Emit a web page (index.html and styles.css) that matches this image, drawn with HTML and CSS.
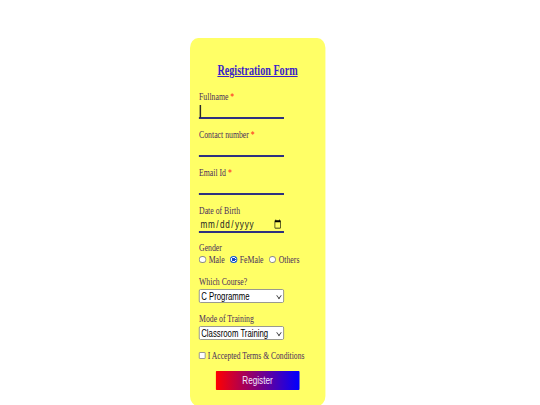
FILE: index.html
```html
<!DOCTYPE html>
<html lang="en">
<head>
<meta charset="utf-8">
<title>Registration Form</title>
<link rel="stylesheet" href="styles.css">
</head>
<body>
<form class="card">
  <h1 class="title">Registration Form</h1>

  <div class="field">
    <label class="lbl" for="fullname">Fullname <span class="req">*</span></label>
    <div class="wrap">
      <input class="line" id="fullname" type="text">
      <span class="caret"></span>
    </div>
  </div>

  <div class="field">
    <label class="lbl" for="contact">Contact number <span class="req">*</span></label>
    <input class="line" id="contact" type="text">
  </div>

  <div class="field">
    <label class="lbl" for="email">Email Id <span class="req">*</span></label>
    <input class="line" id="email" type="text">
  </div>

  <div class="field field-date">
    <label class="lbl" for="dob">Date of Birth</label>
    <input class="line date" id="dob" type="date">
  </div>

  <div class="field">
    <div class="lbl">Gender</div>
    <div class="opts">
      <label class="opt"><input class="radio" type="radio" name="g">Male</label>
      <label class="opt"><input class="radio" type="radio" name="g" checked>FeMale</label>
      <label class="opt"><input class="radio" type="radio" name="g">Others</label>
    </div>
  </div>

  <div class="field">
    <label class="lbl" for="course">Which Course?</label>
    <div class="selwrap">
      <select class="sel" id="course">
        <option>C Programme</option>
        <option>Java</option>
        <option>Python</option>
      </select>
    </div>
  </div>

  <div class="field">
    <label class="lbl" for="mode">Mode of Training</label>
    <div class="selwrap">
      <select class="sel" id="mode">
        <option>Classroom Training</option>
        <option>Online Training</option>
      </select>
    </div>
  </div>

  <label class="terms"><input class="check" type="checkbox">I Accepted Terms &amp; Conditions</label>

  <button class="btn" type="button">Register</button>
</form>
</body>
</html>
```

FILE: styles.css
```css
html, body {
  margin: 0;
  padding: 0;
  overflow: hidden;
  background: #ffffff;
}

body {
  height: 405px;
}

.card {
  margin: 38px 0 0 190px;
  width: 182.5px;
  height: 368px;
  box-sizing: border-box;
  padding: 25px 12.2px 0 12.2px;
  background: #ffff66;
  border-radius: 11px / 10px;
  transform: scaleX(0.74);
  transform-origin: 0 0;
  font-family: "Liberation Serif", "Times New Roman", serif;
  color: #4a2d5c;
}

.title {
  margin: 0 0 11px 0;
  font-size: 13.7px;
  line-height: 16px;
  font-weight: bold;
  text-align: center;
  text-decoration: underline;
  color: #3a1ec8;
}

.field {
  margin-bottom: 9px;
}

.field-date {
  margin-bottom: 8px;
}

.lbl {
  display: block;
  font-size: 10.5px;
  line-height: 13px;
}

.req {
  color: #ff1a1a;
}

.wrap {
  position: relative;
  width: 115px;
}

.caret {
  position: absolute;
  left: 1px;
  top: 2px;
  width: 1.4px;
  height: 13px;
  background: #2b2b2b;
}

.line {
  display: block;
  box-sizing: border-box;
  width: 115px;
  height: 16px;
  margin: 0;
  padding: 0 1px;
  border: none;
  border-bottom: 2px solid #2e3080;
  background: transparent;
  font-family: "Liberation Sans", Arial, sans-serif;
  font-size: 11px;
  color: #222;
  outline: none;
}

.date {
  font-size: 11px;
  letter-spacing: 1px;
  color: #222;
}

.opts {
  display: flex;
  align-items: center;
  gap: 7.5px;
  margin-top: -1px;
  font-size: 10.5px;
  line-height: 13px;
}

.opt {
  display: inline-flex;
  align-items: center;
}

.radio {
  appearance: none;
  -webkit-appearance: none;
  box-sizing: border-box;
  width: 9.5px;
  height: 7px;
  margin: 0 3.5px 0 0;
  border: 1px solid #8a8a8a;
  border-radius: 50%;
  background: #ffffff;
}

.radio:checked {
  border-color: #1a5fd6;
  background: radial-gradient(ellipse at center, #1646c8 0 45%, #ffffff 52% 62%, #1a5fd6 68%);
}

.selwrap {
  position: relative;
  width: 115px;
  margin-top: 1px;
}

.selwrap::after {
  content: "";
  position: absolute;
  right: 5px;
  top: 3.5px;
  width: 3.5px;
  height: 3.5px;
  border-right: 1.5px solid #333;
  border-bottom: 1.5px solid #333;
  transform: rotate(45deg);
  pointer-events: none;
}

.sel {
  appearance: none;
  -webkit-appearance: none;
  display: block;
  box-sizing: border-box;
  width: 115px;
  height: 14px;
  margin: 0;
  padding: 0 12px 0 2px;
  border: 1px solid #8a8a8a;
  border-radius: 2px;
  background: #ffffff;
  font-family: "Liberation Sans", Arial, sans-serif;
  font-size: 10.5px;
  line-height: 12px;
  color: #000;
}

.terms {
  display: flex;
  align-items: center;
  font-size: 10.3px;
  line-height: 13px;
}

.check {
  appearance: none;
  -webkit-appearance: none;
  box-sizing: border-box;
  width: 8.8px;
  height: 7px;
  margin: 0 3px 0 0;
  border: 1px solid #8a8a8a;
  border-radius: 1px;
  background: #ffffff;
}

.btn {
  display: block;
  width: 113.5px;
  height: 19px;
  margin: 9px auto 0 auto;
  padding: 0;
  border: none;
  border-radius: 1px;
  background: linear-gradient(to right, #ff0000, #0000ff);
  color: #f4eaff;
  font-family: "Liberation Sans", Arial, sans-serif;
  font-size: 11px;
  line-height: 19px;
}
```
